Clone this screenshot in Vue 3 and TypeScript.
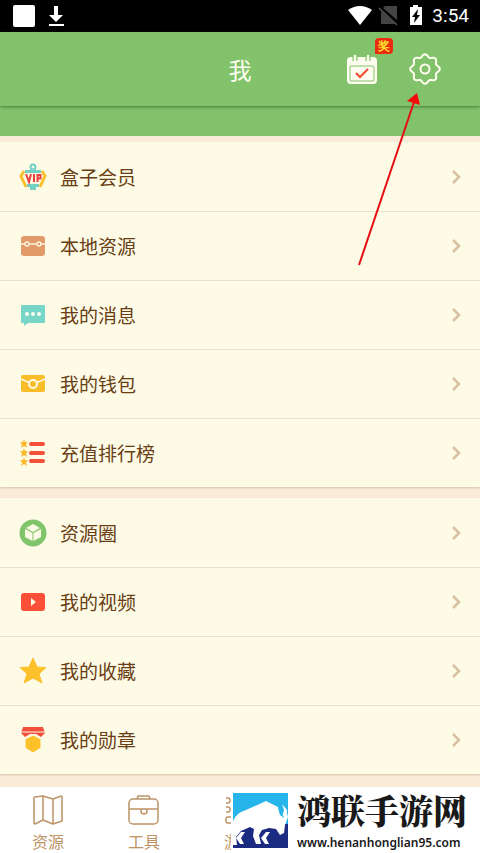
<script setup lang="ts">
interface Row {
  id: string
  label: string
}

const groups: Row[][] = [
  [
    { id: 'vip', label: '盒子会员' },
    { id: 'local', label: '本地资源' },
    { id: 'message', label: '我的消息' },
    { id: 'wallet', label: '我的钱包' },
    { id: 'rank', label: '充值排行榜' },
  ],
  [
    { id: 'circle', label: '资源圈' },
    { id: 'video', label: '我的视频' },
    { id: 'favorite', label: '我的收藏' },
    { id: 'medal', label: '我的勋章' },
  ],
]

// Outline of the settings cog: a circle whose radius waves through eight lobes.
const cogPath =
  Array.from({ length: 96 }, (_, step) => {
    const angle = (step / 96) * Math.PI * 2
    const radius = 13.4 + 1.4 * Math.cos(angle * 8)
    const x = 16 + radius * Math.cos(angle)
    const y = 16 + radius * Math.sin(angle)
    return `${step === 0 ? 'M' : 'L'}${x.toFixed(2)} ${y.toFixed(2)}`
  }).join('') + 'Z'
</script>

<template>
  <div class="screen">
    <div class="status">
      <svg width="54" height="26" viewBox="0 0 54 26" fill="#fff">
        <rect x="0" y="2" width="22" height="22" rx="2" />
        <path d="M41 3h4v9h5l-7 7-7-7h5zM36 21h15v2H36z" />
      </svg>
      <div class="status-right">
        <svg width="76" height="22" viewBox="0 0 76 22">
          <path d="M0 5Q12-3 24 5L12 20z" fill="#fff" />
          <path d="M37 1h12v14L35 3zM33 6l14 13H33z" fill="#444" />
          <path d="M31 3l18 17" stroke="#555" stroke-width="1.5" />
          <path d="M65 0h5v2h4v18H62V2h3z" fill="#fff" />
          <path d="M70 4l-6 8h3l-1 6 6-8h-3z" fill="#000" />
        </svg>
        <span class="clock">3:54</span>
      </div>
    </div>

    <header class="header">
      <h1 class="title">我</h1>
      <div class="actions">
        <button class="action" type="button" aria-label="签到">
          <svg width="32" height="32" viewBox="0 0 32 32" fill="none">
            <rect x="1" y="4" width="30" height="27" rx="4" fill="#fffdf0" />
            <rect x="4" y="13" width="24" height="15" rx="1" stroke="#82c26b" stroke-width="1" />
            <path d="M9 1v7M22 1v7" stroke="#82c26b" stroke-width="5" />
            <path d="M9 3v5M22 3v5" stroke="#fffdf0" stroke-width="2.500" stroke-linecap="round" />
            <path d="M10 20l4 4 8-8" stroke="#f0492f" stroke-width="2" />
          </svg>
          <span class="badge">奖</span>
        </button>
        <button class="action" type="button" aria-label="设置">
          <svg width="32" height="32" viewBox="0 0 32 32" fill="none" stroke="#fffdf0" stroke-width="2">
            <path :d="cogPath" stroke-linejoin="round" />
            <circle cx="16" cy="16" r="4.500" />
          </svg>
        </button>
      </div>
    </header>
    <div class="band"></div>

    <main class="content">
      <ul v-for="(rows, index) in groups" :key="index" class="group">
        <li v-for="row in rows" :key="row.id" class="item">
          <a class="row" :href="'#' + row.id">
            <svg class="row-icon" width="28" height="28" viewBox="0 0 28 28" fill="none">
              <g v-if="row.id === 'vip'">
                <path d="M5 8L2 13l5 11M23 8l3 5-5 11" stroke="#fbc02d" stroke-width="3" />
                <path d="M6 7h16v3H6zM11 8h6v19h-6zM8 21h12v3H8z" fill="#73d0c5" />
                <circle cx="14" cy="4" r="2.500" stroke="#73d0c5" stroke-width="2" />
                <path d="M5 10h18v6l-3 5H8l-3-5z" fill="#fdfbe6" />
                <path d="M7 11l3 8 2-8M15 11v8M18.500 19v-7h3v3.500h-3" stroke="#e9403e" stroke-width="2" />
              </g>
              <g v-else-if="row.id === 'local'">
                <rect x="2" y="4" width="24" height="20" rx="3" fill="#e39a6b" />
                <path d="M2 12h4M10 12h8M22 12h4" stroke="#fdf3da" stroke-width="1.500" />
                <circle cx="8" cy="12" r="2" stroke="#fdf3da" stroke-width="1.500" />
                <circle cx="20" cy="12" r="2" stroke="#fdf3da" stroke-width="1.500" />
              </g>
              <g v-else-if="row.id === 'message'">
                <path d="M3 4h22q1 0 1 1v16q0 1-1 1H9l-4 3v-3H3q-1 0-1-1V5q0-1 1-1z" fill="#78d6c8" />
                <g fill="#fffdf0"><circle cx="8" cy="13" r="2" /><circle cx="14" cy="13" r="2" /><circle cx="20" cy="13" r="2" /></g>
              </g>
              <g v-else-if="row.id === 'wallet'">
                <rect x="2" y="5" width="24" height="17" rx="2" fill="#f9bd29" />
                <path d="M2 9q6 3 8 3M26 9q-6 3-8 3" stroke="#fdfbe6" stroke-width="1.500" />
                <circle cx="14" cy="14" r="4" stroke="#fdfbe6" stroke-width="2" />
              </g>
              <g v-else-if="row.id === 'rank'">
                <path d="M12 5h12M12 14h12M12 22h12" stroke="#f2503a" stroke-width="4" stroke-linecap="round" />
                <g fill="#fbb92c">
                  <path d="M5 0l1 3 3 .3-2 2.200 1 3.500-3-2-3 2 1-3.500L1 3.300 4 3z" />
                  <path d="M5 9l1 3 3 .3-2 2.200 1 3.500-3-2-3 2 1-3.500-2-2.200 3-.3z" />
                  <path d="M5 18l1 3 3 .3-2 2.200 1 3.500-3-2-3 2 1-3.500-2-2.200 3-.3z" />
                </g>
              </g>
              <g v-else-if="row.id === 'circle'">
                <circle cx="14" cy="14" r="13.500" fill="#80c46b" />
                <path d="M14 5l7 4-7 4-7-4zM6 10l7.500 4v8L6 18zM22 10l-7.500 4v8l7.500-4z" fill="#fdfbe6" />
              </g>
              <g v-else-if="row.id === 'video'">
                <rect x="2" y="5" width="24" height="18" rx="3" fill="#fb4f38" />
                <path d="M12 10v8l5-4z" fill="#fdfbe6" />
              </g>
              <path v-else-if="row.id === 'favorite'" d="M14 1l4 9 9 .5-7 6.500 3 9-9-5-9 5 3-9-7-6.500 9-.5z" fill="#fdc12c" stroke="#fdc12c" stroke-linejoin="round" />
              <g v-else>
                <path d="M4 1h20l2 6-4 4-5-3h-6l-5 3-4-4z" fill="#f2503a" />
                <path d="M2 6h24" stroke="#fdfbe6" stroke-width="1" />
                <path d="M14 9l8 4v9l-8 5-8-5v-9z" fill="#fdc12c" stroke="#fdfbe6" />
              </g>
            </svg>
            <span class="label">{{ row.label }}</span>
            <svg width="10" height="16" viewBox="0 0 10 16" fill="none">
              <path d="M2 2l6 6-6 6" stroke="#d8c1a2" stroke-width="2.500" />
            </svg>
          </a>
        </li>
      </ul>
    </main>

    <footer class="footer">
      <nav class="tabs">
        <a class="tab" href="#resources">
          <svg width="32" height="32" viewBox="0 0 32 32" fill="none" stroke="#bd9467" stroke-width="1.500" stroke-linejoin="round">
            <path d="M2 4q0-1 1-1L11 2l10 3 8-3q1 0 1 1v24l-9 3-10-4-8 4q-1 0-1-1zM11 2v24M21 5v25" />
          </svg>
          <span>资源</span>
        </a>
        <a class="tab" href="#tools">
          <svg width="32" height="32" viewBox="0 0 32 32" fill="none" stroke="#bd9467" stroke-width="1.500">
            <rect x="1" y="5" width="29" height="25" rx="4" />
            <path d="M9 5l1-3h11l1 3M1 15h29M13 15v2q0 3 3 3t3-3v-2" stroke-linejoin="round" />
          </svg>
          <span>工具</span>
        </a>
        <a class="tab" href="#games">
          <svg width="32" height="32" viewBox="0 0 32 32" fill="none" stroke="#bd9467" stroke-width="1.500">
            <path d="M2 4h2q2 0 2 2v1q0 2-2 2H2M2 13h2q2 0 2 2v1q0 2-2 2H2M7 29H4q-2 0-2-2v-2q0-2 2-2h3" />
          </svg>
          <span>游戏</span>
        </a>
      </nav>
      <div class="brand">
        <svg class="brand-logo" width="55" height="55" viewBox="0 0 55 55">
          <path d="M0 0h55v31H0z" fill="#25b5eb" />
          <path d="M0 31h55v24H0z" fill="#1c2b82" />
          <path d="M0 28Q3 20 13 17L33 8l12 6 3 7 6-1 1 4-3 8-1 8-4 2-4-6-7-1-7 2-3 5 2 9h-5l-3-8 1-7-4-2-9 4-5 6 1 8H0z" fill="#fff" />
          <path d="M48 10l-3 5 2 7 4 3-2-6 2-2z" fill="#25b5eb" />
          <path d="M49 11l2 6-1 4 4 1v-5z" fill="#fff" />
          <path d="M12 39H8l-5 6 4 6h4l-3-6zM37 39h-4l-5 6 4 6h4l-3-6z" fill="#fff" />
        </svg>
        <div class="brand-text">
          <strong class="brand-name">鸿联手游网</strong>
          <span class="brand-url">www.henanhonglian95.com</span>
        </div>
      </div>
    </footer>

    <svg class="pointer" width="68" height="176" viewBox="0 0 68 176">
      <path d="M4 174L59 11" stroke="#e60e12" stroke-width="2" />
      <path d="M62 2l3 12-13-4z" fill="#f5090b" />
    </svg>
  </div>
</template>

<style>
body {
  margin: 0;
  background: #faebd9;
}
</style>

<style scoped>
.screen {
  position: relative;
  display: flex;
  flex-direction: column;
  min-height: 100vh;
  background: #faebd9;
  color: #6a3e14;
  font-family: "Noto Sans CJK SC", sans-serif;
}

.status {
  display: flex;
  align-items: center;
  justify-content: space-between;
  height: 32px;
  padding: 0 11px 0 13px;
  background: #000;
  color: #fff;
}

.status-right {
  display: flex;
  align-items: center;
  gap: 8px;
}

.clock {
  font: 400 19px/32px Roboto, sans-serif;
}

.header {
  position: relative;
  display: grid;
  grid-template-columns: 1fr auto 1fr;
  align-items: center;
  height: 74px;
  background: #82c26b;
  box-shadow: 0 1px 3px rgba(30, 70, 20, 0.6);
}

.title {
  grid-column: 2;
  margin: 0;
  color: #fffff0;
  font-size: 23px;
  font-weight: 400;
  line-height: 32px;
}

.actions {
  display: flex;
  justify-content: flex-end;
  gap: 31px;
  padding-right: 39px;
}

.action {
  position: relative;
  display: flex;
  padding: 0;
  border: 0;
  background: none;
}

.badge {
  position: absolute;
  top: -15px;
  right: -15px;
  padding: 0 3px;
  border-radius: 4px 4px 4px 0;
  background: #e92b0e;
  color: #ffdf2c;
  font-size: 12px;
  font-weight: 700;
  line-height: 16px;
}

.band {
  height: 30px;
  background: #82c26b;
}

.content {
  display: flex;
  flex-direction: column;
  gap: 11px;
  padding: 6px 0 13px;
}

.group {
  margin: 0;
  padding: 0;
  list-style: none;
  background: #fdfbe6;
  box-shadow: 0 1px 2px rgba(130, 100, 60, 0.3);
}

.item + .item {
  border-top: 1px solid #eadfd0;
}

.row {
  display: flex;
  align-items: center;
  height: 68px;
  padding: 0 19px;
  box-sizing: border-box;
  color: inherit;
  text-decoration: none;
}

.item:first-child .row {
  height: 69px;
}

.label {
  flex: 1;
  padding-left: 13px;
  font-size: 19px;
  line-height: 28px;
}

.footer {
  position: relative;
  flex: 1;
  background: #fff;
}

.tabs {
  display: grid;
  grid-template-columns: repeat(5, 1fr);
}

.tab {
  display: flex;
  flex-direction: column;
  align-items: center;
  padding-top: 7px;
  color: #bd9467;
  font-size: 16px;
  line-height: 24px;
  text-decoration: none;
}

.tab span {
  padding-top: 3px;
}

.brand {
  position: absolute;
  top: 6px;
  right: 0;
  display: flex;
  gap: 9px;
  width: 247px;
  padding-left: 2px;
  background: #fff;
}

.brand-logo {
  flex: none;
}

.brand-text {
  display: flex;
  flex-direction: column;
  gap: 8px;
  color: #191919;
}

.brand-name {
  font-family: "Noto Serif CJK SC", "Noto Sans CJK SC", serif;
  font-size: 34px;
  font-weight: 900;
  line-height: 34px;
}

.brand-url {
  font: 600 12px/16px "Noto Sans", sans-serif;
}

.pointer {
  position: absolute;
  top: 91px;
  right: 57px;
  pointer-events: none;
}
</style>
